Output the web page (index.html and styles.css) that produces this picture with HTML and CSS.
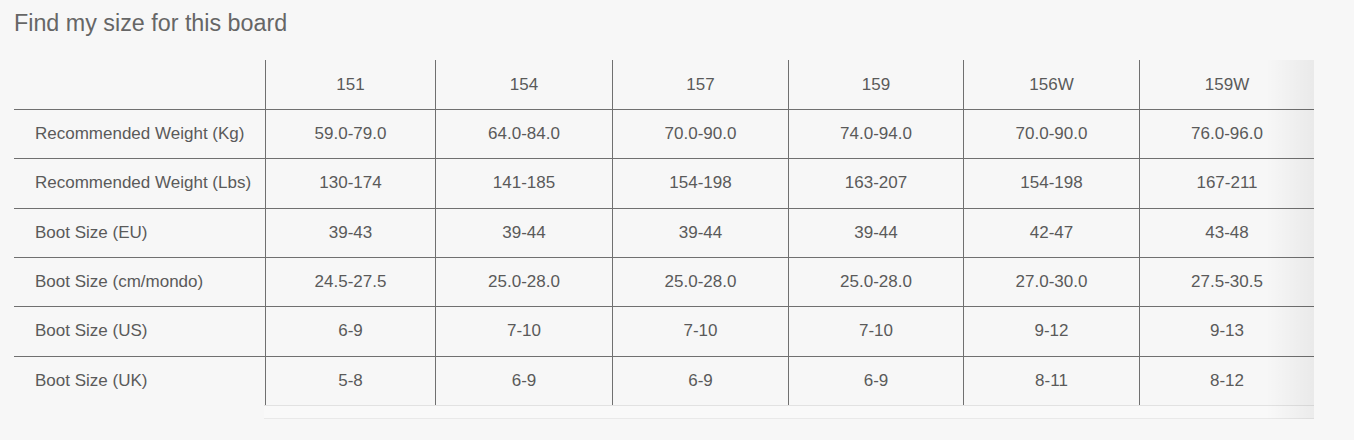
FILE: index.html
```html
<!DOCTYPE html>
<html lang="en">
<head>
<meta charset="utf-8">
<title>Find my size for this board</title>
<link rel="stylesheet" href="styles.css">
</head>
<body>
<section class="size-chart">
  <h2 class="title">Find my size for this board</h2>
  <div class="chart">
    <div class="cell label head"></div>
    <div class="cell head">151</div>
    <div class="cell head">154</div>
    <div class="cell head">157</div>
    <div class="cell head">159</div>
    <div class="cell head">156W</div>
    <div class="cell head">159W</div>

    <div class="cell label">Recommended Weight (Kg)</div>
    <div class="cell">59.0-79.0</div>
    <div class="cell">64.0-84.0</div>
    <div class="cell">70.0-90.0</div>
    <div class="cell">74.0-94.0</div>
    <div class="cell">70.0-90.0</div>
    <div class="cell">76.0-96.0</div>

    <div class="cell label">Recommended Weight (Lbs)</div>
    <div class="cell">130-174</div>
    <div class="cell">141-185</div>
    <div class="cell">154-198</div>
    <div class="cell">163-207</div>
    <div class="cell">154-198</div>
    <div class="cell">167-211</div>

    <div class="cell label">Boot Size (EU)</div>
    <div class="cell">39-43</div>
    <div class="cell">39-44</div>
    <div class="cell">39-44</div>
    <div class="cell">39-44</div>
    <div class="cell">42-47</div>
    <div class="cell">43-48</div>

    <div class="cell label">Boot Size (cm/mondo)</div>
    <div class="cell">24.5-27.5</div>
    <div class="cell">25.0-28.0</div>
    <div class="cell">25.0-28.0</div>
    <div class="cell">25.0-28.0</div>
    <div class="cell">27.0-30.0</div>
    <div class="cell">27.5-30.5</div>

    <div class="cell label">Boot Size (US)</div>
    <div class="cell">6-9</div>
    <div class="cell">7-10</div>
    <div class="cell">7-10</div>
    <div class="cell">7-10</div>
    <div class="cell">9-12</div>
    <div class="cell">9-13</div>

    <div class="cell label">Boot Size (UK)</div>
    <div class="cell">5-8</div>
    <div class="cell">6-9</div>
    <div class="cell">6-9</div>
    <div class="cell">6-9</div>
    <div class="cell">8-11</div>
    <div class="cell">8-12</div>

    <div class="track"></div>
    <div class="fade"></div>
  </div>
</section>
</body>
</html>
```

FILE: styles.css
```css
html, body {
  margin: 0;
  padding: 0;
  background: #f7f7f7;
}

body {
  font-family: "Liberation Sans", Arial, sans-serif;
  color: #606060;
}

.size-chart {
  padding: 10px 0 0 14px;
}

.title {
  margin: 0 0 23px;
  font-size: 23.3px;
  line-height: 27px;
  font-weight: 400;
  color: #666666;
}

.chart {
  position: relative;
  display: grid;
  grid-template-columns: 251px 170px 177px 176px 175px 176px 175px;
  grid-template-rows: 49px repeat(6, 49.34px) 14px;
  width: 1300px;
}

.cell {
  display: flex;
  align-items: center;
  justify-content: center;
  box-sizing: border-box;
  border-top: 1px solid #707070;
  border-left: 1px solid #707070;
  font-size: 17px;
  color: #5a5a5a;
}

.cell.head {
  border-top: none;
}

.cell.label {
  justify-content: flex-start;
  padding-left: 21px;
  border-left: none;
}

.track {
  grid-column: 2 / 8;
  margin-left: -1px;
  box-sizing: border-box;
  border-top: 1px solid #e2e2e2;
  border-bottom: 1px solid #e9e9e9;
  background: #f9f9f9;
}

.fade {
  position: absolute;
  top: 0;
  right: 0;
  bottom: 0;
  width: 48px;
  background: linear-gradient(to right, rgba(0, 0, 0, 0), rgba(0, 0, 0, 0.055));
  pointer-events: none;
}
```
